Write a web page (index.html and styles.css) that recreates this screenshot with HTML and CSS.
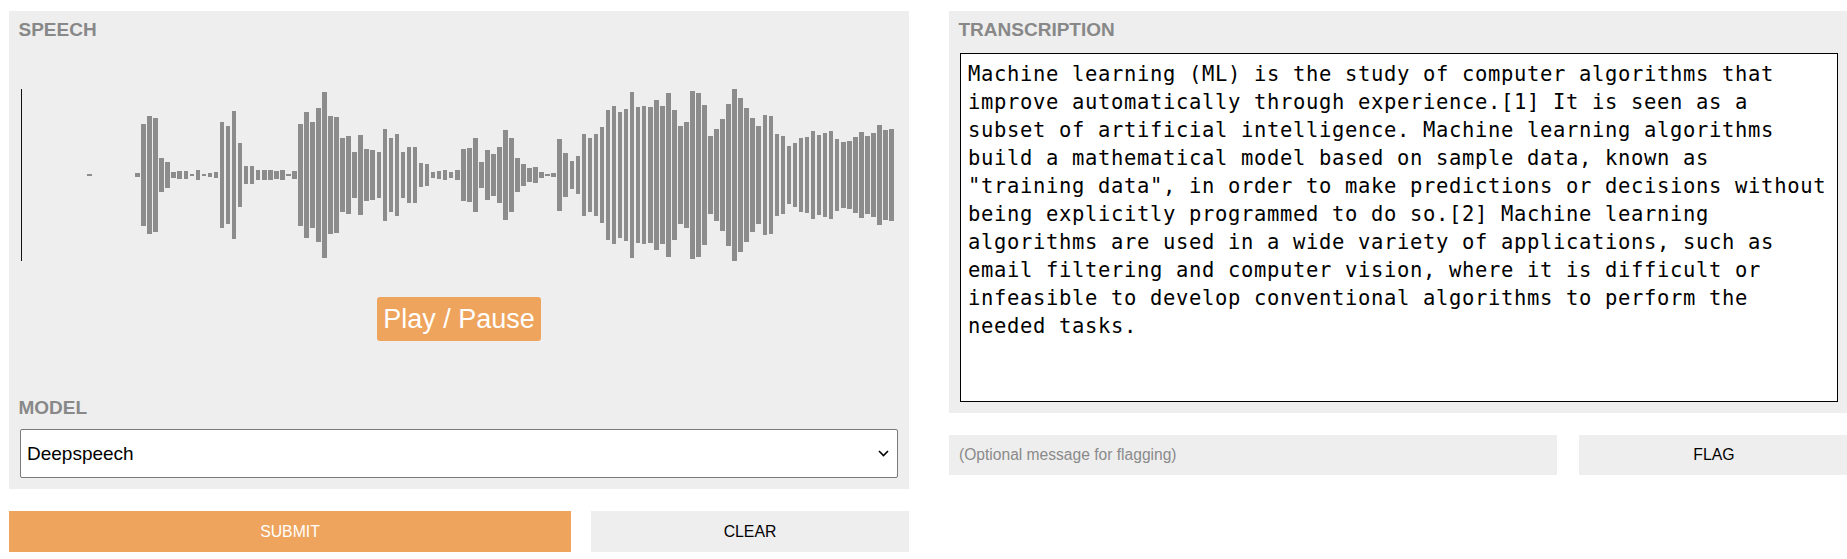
FILE: index.html
```html
<!DOCTYPE html>
<html lang="en">
<head>
<meta charset="utf-8">
<title>Speech recognition demo</title>
<link rel="stylesheet" href="styles.css">
</head>
<body>
<div class="layout">
  <div class="column">
    <section class="panel">
      <div class="label">Speech</div>
      <div class="wave">
        <span class="cursor"></span>
        <i class="bar" style="height:2px"></i><i class="bar" style="height:0px"></i><i class="bar" style="height:0px"></i><i class="bar" style="height:0px"></i><i class="bar" style="height:0px"></i><i class="bar" style="height:0px"></i><i class="bar" style="height:0px"></i><i class="bar" style="height:0px"></i><i class="bar" style="height:4px"></i><i class="bar" style="height:102px"></i><i class="bar" style="height:118px"></i><i class="bar" style="height:114px"></i><i class="bar" style="height:34px"></i><i class="bar" style="height:26px"></i><i class="bar" style="height:6px"></i><i class="bar" style="height:8px"></i><i class="bar" style="height:8px"></i><i class="bar" style="height:2px"></i><i class="bar" style="height:10px"></i><i class="bar" style="height:2px"></i><i class="bar" style="height:4px"></i><i class="bar" style="height:6px"></i><i class="bar" style="height:106px"></i><i class="bar" style="height:98px"></i><i class="bar" style="height:128px"></i><i class="bar" style="height:64px"></i><i class="bar" style="height:18px"></i><i class="bar" style="height:18px"></i><i class="bar" style="height:10px"></i><i class="bar" style="height:10px"></i><i class="bar" style="height:10px"></i><i class="bar" style="height:8px"></i><i class="bar" style="height:10px"></i><i class="bar" style="height:2px"></i><i class="bar" style="height:8px"></i><i class="bar" style="height:102px"></i><i class="bar" style="height:126px"></i><i class="bar" style="height:106px"></i><i class="bar" style="height:134px"></i><i class="bar" style="height:166px"></i><i class="bar" style="height:118px"></i><i class="bar" style="height:116px"></i><i class="bar" style="height:74px"></i><i class="bar" style="height:78px"></i><i class="bar" style="height:46px"></i><i class="bar" style="height:80px"></i><i class="bar" style="height:52px"></i><i class="bar" style="height:50px"></i><i class="bar" style="height:46px"></i><i class="bar" style="height:92px"></i><i class="bar" style="height:74px"></i><i class="bar" style="height:82px"></i><i class="bar" style="height:46px"></i><i class="bar" style="height:56px"></i><i class="bar" style="height:56px"></i><i class="bar" style="height:24px"></i><i class="bar" style="height:22px"></i><i class="bar" style="height:6px"></i><i class="bar" style="height:8px"></i><i class="bar" style="height:10px"></i><i class="bar" style="height:6px"></i><i class="bar" style="height:10px"></i><i class="bar" style="height:52px"></i><i class="bar" style="height:54px"></i><i class="bar" style="height:74px"></i><i class="bar" style="height:26px"></i><i class="bar" style="height:50px"></i><i class="bar" style="height:42px"></i><i class="bar" style="height:56px"></i><i class="bar" style="height:90px"></i><i class="bar" style="height:74px"></i><i class="bar" style="height:34px"></i><i class="bar" style="height:22px"></i><i class="bar" style="height:14px"></i><i class="bar" style="height:16px"></i><i class="bar" style="height:6px"></i><i class="bar" style="height:2px"></i><i class="bar" style="height:4px"></i><i class="bar" style="height:72px"></i><i class="bar" style="height:44px"></i><i class="bar" style="height:28px"></i><i class="bar" style="height:38px"></i><i class="bar" style="height:82px"></i><i class="bar" style="height:74px"></i><i class="bar" style="height:82px"></i><i class="bar" style="height:96px"></i><i class="bar" style="height:130px"></i><i class="bar" style="height:138px"></i><i class="bar" style="height:126px"></i><i class="bar" style="height:132px"></i><i class="bar" style="height:166px"></i><i class="bar" style="height:136px"></i><i class="bar" style="height:138px"></i><i class="bar" style="height:136px"></i><i class="bar" style="height:150px"></i><i class="bar" style="height:138px"></i><i class="bar" style="height:164px"></i><i class="bar" style="height:130px"></i><i class="bar" style="height:98px"></i><i class="bar" style="height:106px"></i><i class="bar" style="height:168px"></i><i class="bar" style="height:164px"></i><i class="bar" style="height:140px"></i><i class="bar" style="height:78px"></i><i class="bar" style="height:92px"></i><i class="bar" style="height:112px"></i><i class="bar" style="height:142px"></i><i class="bar" style="height:172px"></i><i class="bar" style="height:154px"></i><i class="bar" style="height:134px"></i><i class="bar" style="height:114px"></i><i class="bar" style="height:98px"></i><i class="bar" style="height:120px"></i><i class="bar" style="height:118px"></i><i class="bar" style="height:82px"></i><i class="bar" style="height:78px"></i><i class="bar" style="height:58px"></i><i class="bar" style="height:64px"></i><i class="bar" style="height:74px"></i><i class="bar" style="height:76px"></i><i class="bar" style="height:88px"></i><i class="bar" style="height:80px"></i><i class="bar" style="height:84px"></i><i class="bar" style="height:88px"></i><i class="bar" style="height:72px"></i><i class="bar" style="height:66px"></i><i class="bar" style="height:68px"></i><i class="bar" style="height:76px"></i><i class="bar" style="height:86px"></i><i class="bar" style="height:78px"></i><i class="bar" style="height:84px"></i><i class="bar" style="height:100px"></i><i class="bar" style="height:90px"></i><i class="bar" style="height:92px"></i>
      </div>
      <div class="play-row"><button class="play" type="button">Play / Pause</button></div>
      <div class="label label-model">Model</div>
      <div class="select-wrap">
        <select class="select">
          <option>Deepspeech</option>
        </select>
        <svg class="chevron" width="11" height="7" viewBox="0 0 11 7" aria-hidden="true"><polyline points="1,1 5.5,5.5 10,1" fill="none" stroke="#000" stroke-width="1.6"/></svg>
      </div>
    </section>
    <div class="actions">
      <button class="btn submit" type="button">Submit</button>
      <button class="btn clear" type="button">Clear</button>
    </div>
  </div>
  <div class="column">
    <section class="panel">
      <div class="label">Transcription</div>
      <textarea class="output" readonly>Machine learning (ML) is the study of computer algorithms that improve automatically through experience.[1] It is seen as a subset of artificial intelligence. Machine learning algorithms build a mathematical model based on sample data, known as "training data", in order to make predictions or decisions without being explicitly programmed to do so.[2] Machine learning algorithms are used in a wide variety of applications, such as email filtering and computer vision, where it is difficult or infeasible to develop conventional algorithms to perform the needed tasks.</textarea>
    </section>
    <div class="flag-row">
      <input class="flag-input" type="text" placeholder="(Optional message for flagging)">
      <button class="btn flag" type="button">Flag</button>
    </div>
  </div>
</div>
</body>
</html>
```

FILE: styles.css
```css
html, body {
  overflow: hidden;
}

body {
  margin: 0;
  padding: 11px 0 0 9px;
  background: #fff;
  font-family: "Liberation Sans", Arial, sans-serif;
  color: #000;
}

.layout {
  display: grid;
  grid-template-columns: 900px 900px;
  column-gap: 40px;
  width: 1840px;
}

.panel {
  background: #eeeeee;
  padding: 8px 11px 11px;
}

.label {
  font-weight: bold;
  font-size: 19px;
  line-height: 22px;
  color: #888888;
  text-transform: uppercase;
  margin-left: -1.5px;
}

.wave {
  display: flex;
  align-items: center;
  height: 172px;
  margin-top: 48px;
}

.cursor {
  align-self: stretch;
  width: 1px;
  margin: 0 65px 0 1px;
  background: #111;
  flex: none;
}

.bar {
  flex: none;
  width: 4.6px;
  margin-right: 1.45px;
  background: #8c8c8c;
}

.play-row {
  display: flex;
  justify-content: center;
  margin-top: 36px;
}

.play {
  border: none;
  border-radius: 3px;
  background: #eea45d;
  color: #fff;
  font-family: "Liberation Sans", Arial, sans-serif;
  font-size: 27px;
  line-height: 30px;
  padding: 7px 6px;
}

.label-model {
  margin-top: 56px;
}

.select-wrap {
  position: relative;
  margin-top: 10px;
}

.select {
  display: block;
  width: 100%;
  height: 49px;
  box-sizing: border-box;
  appearance: none;
  -webkit-appearance: none;
  background: #fff;
  border: 1px solid #7a7a7a;
  border-radius: 2px;
  padding: 0 30px 0 6px;
  font-family: "Liberation Sans", Arial, sans-serif;
  font-size: 19px;
  color: #000;
}

.chevron {
  position: absolute;
  right: 9px;
  top: 21px;
  pointer-events: none;
}

.actions {
  display: grid;
  grid-template-columns: 562px 1fr;
  column-gap: 20px;
  margin-top: 22px;
}

.btn {
  border: none;
  font-family: "Liberation Sans", Arial, sans-serif;
  font-size: 15.8px;
  text-transform: uppercase;
  padding: 0;
}

.submit {
  height: 41px;
  background: #eea45d;
  color: #fff;
}

.clear {
  height: 41px;
  background: #eeeeee;
  color: #000;
}

.output {
  display: block;
  width: 100%;
  height: 349px;
  box-sizing: border-box;
  margin-top: 12px;
  border: 1px solid #000;
  border-radius: 0;
  background: #fff;
  padding: 6px 7px;
  font-family: "DejaVu Sans Mono", monospace;
  font-size: 20.5px;
  letter-spacing: 0.66px;
  line-height: 28px;
  color: #000;
  resize: none;
  overflow: hidden;
  outline: none;
}

.flag-row {
  display: grid;
  grid-template-columns: 608px 1fr;
  column-gap: 22px;
  margin-top: 22px;
}

.flag-input {
  height: 40px;
  box-sizing: border-box;
  border: none;
  background: #eeeeee;
  padding: 0 10px;
  font-family: "Liberation Sans", Arial, sans-serif;
  font-size: 15.6px;
  color: #000;
  outline: none;
}

.flag-input::placeholder {
  color: #8a8a8a;
}

.flag {
  height: 40px;
  background: #eeeeee;
  color: #000;
}
```
